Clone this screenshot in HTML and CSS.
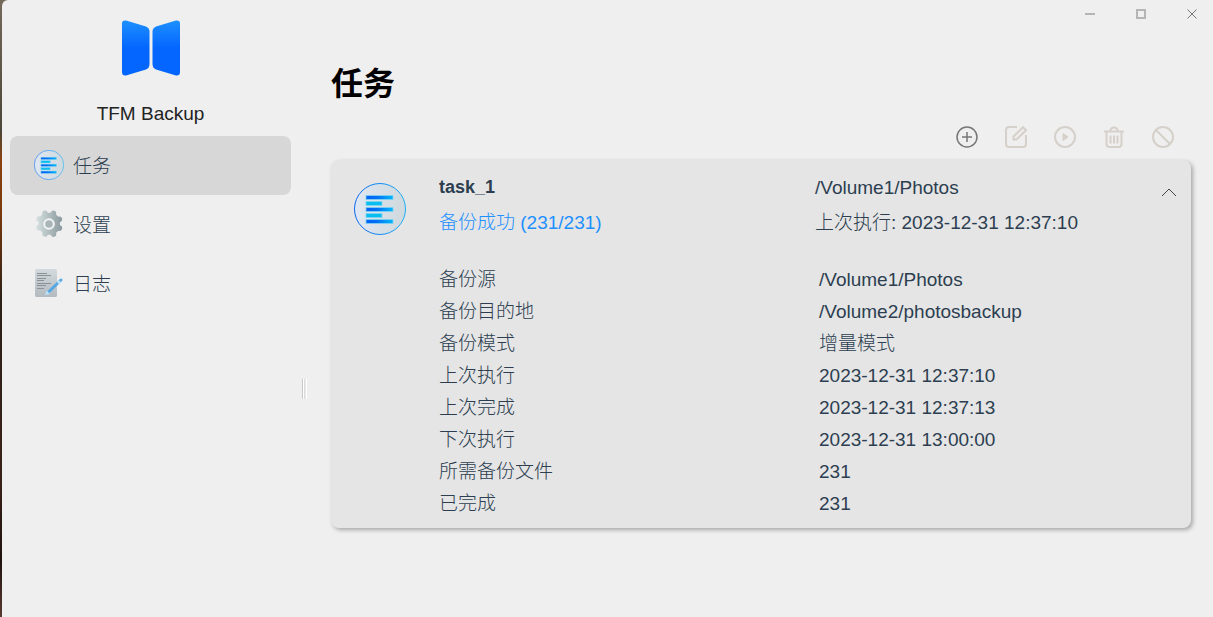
FILE: index.html
```html
<!DOCTYPE html>
<html lang="zh-CN">
<head>
    <meta charset="UTF-8">
    <meta name="viewport" content="width=device-width, initial-scale=1.0">
    <title>TFM Backup</title>
    <link rel="stylesheet" href="styles.css">
</head>
<body>
    <svg class="defs" aria-hidden="true">
        <defs>
            <linearGradient id="disc" x1="0" y1="0" x2="1" y2="0">
                <stop offset="0" stop-color="#dfe8f2"/>
                <stop offset="1" stop-color="#cfd8dc"/>
            </linearGradient>
            <linearGradient id="ring" x1="0" y1="0" x2="1" y2="0">
                <stop offset="0" stop-color="#0a66f0"/>
                <stop offset="1" stop-color="#1cb0f6"/>
            </linearGradient>
            <linearGradient id="bar" x1="0" y1="0" x2="1" y2="0">
                <stop offset="0" stop-color="#0062f5"/>
                <stop offset="0.4" stop-color="#0070f5"/>
                <stop offset="1" stop-color="#05b8fa"/>
            </linearGradient>
            <linearGradient id="book" x1="0" y1="0" x2="0" y2="1">
                <stop offset="0" stop-color="#1e90ff"/>
                <stop offset="0.5" stop-color="#0466ff"/>
                <stop offset="1" stop-color="#0466ff"/>
            </linearGradient>
            <linearGradient id="gear" x1="0" y1="0" x2="1" y2="0">
                <stop offset="0" stop-color="#d6e0e0"/>
                <stop offset="1" stop-color="#8a989d"/>
            </linearGradient>
            <linearGradient id="paper" x1="0" y1="0" x2="0" y2="1">
                <stop offset="0" stop-color="#d3d9dd"/>
                <stop offset="1" stop-color="#b3bbc0"/>
            </linearGradient>
            <symbol id="task-icon" viewBox="0 0 52 52">
                <circle cx="26" cy="26" r="25.5" fill="url(#disc)" stroke="url(#ring)"/>
                <g stroke="#7fd3f2" stroke-width="0.8">
                    <rect x="12" y="12.5" width="27" height="4" fill="url(#bar)"/>
                    <rect x="12" y="18.5" width="16" height="4" fill="#08bdf0"/>
                    <rect x="12" y="24.5" width="27" height="4" fill="url(#bar)"/>
                    <rect x="12" y="30.5" width="16" height="4" fill="#08bdf0"/>
                    <rect x="12" y="36.5" width="27" height="4" fill="url(#bar)"/>
                </g>
            </symbol>
        </defs>
    </svg>

    <div class="app">
        <aside class="sidebar">
            <svg class="logo" viewBox="0 0 58 56">
                <path fill="url(#book)" d="M0 3.5Q0 0 4 .5L24 6.5Q27.5 8 27.5 11.5V44Q27.5 48 24 49.5L4 55.5Q0 56 0 52Z"/>
                <path fill="url(#book)" d="M58 3.5Q58 0 54 .5L34 6.5Q30.5 8 30.5 11.5V44Q30.5 48 34 49.5L54 55.5Q58 56 58 52Z"/>
            </svg>
            <div class="app-name">TFM Backup</div>
            <nav>
                <a class="nav-item active" href="#tasks">
                    <svg class="nav-icon"><use href="#task-icon"/></svg>
                    <span>任务</span>
                </a>
                <a class="nav-item" href="#settings">
                    <svg class="nav-icon" viewBox="0 0 30 30">
                        <path fill="url(#gear)" d="M10.5 1.5l2 .2 1.3 2h2.8l1.3-2 2-.2 2.2 1.3.1 3 1.8 1.8 3 .2 1.2 2-.3 2-2 1.6v2.6l2 1.5.3 2-1.2 2.2-3 .2-1.8 1.8-.1 3-2.2 1.3-2-.2-1.3-2h-2.8l-1.3 2-2-.2-2.2-1.3-.1-3-1.8-1.8-3-.2-1.2-2.2.3-2 2-1.5v-2.6l-2-1.6-.3-2 1.2-2 3-.2 1.8-1.8.1-3z"/>
                        <circle cx="15" cy="15" r="4.8" fill="#a9b5b8" stroke="#f2f5f5" stroke-width="2"/>
                    </svg>
                    <span>设置</span>
                </a>
                <a class="nav-item" href="#logs">
                    <svg class="nav-icon" viewBox="0 0 30 30">
                        <rect x="1" y="1" width="22" height="28" rx="1.5" fill="url(#paper)"/>
                        <path stroke="#8b9194" d="M3 5.5h10M3 7.5h14M3 10.5h9M3 12.5h7M3 15.5h14M3 17.5h9M3 20.5h7"/>
                        <path stroke="#55a8e4" stroke-width="3" stroke-linecap="round" d="M14 24.500L27 12"/>
                        <path fill="#b9e3fa" d="M11 27l1.500-4.500 3.500 3.300zM22.800 14l2-2 2.200 2.200-2 2z"/>
                    </svg>
                    <span>日志</span>
                </a>
            </nav>
        </aside>

        <div class="splitter"></div>

        <main class="content">
            <div class="titlebar">
                <button type="button" aria-label="最小化">
                    <svg viewBox="0 0 10 10"><path stroke="#b5b5b5" stroke-width="2" d="M0 5h10"/></svg>
                </button>
                <button type="button" aria-label="最大化">
                    <svg viewBox="0 0 10 10"><rect x="1" y="1" width="8" height="8" stroke="#b5b5b5" stroke-width="2" fill="none"/></svg>
                </button>
                <button type="button" aria-label="关闭">
                    <svg viewBox="0 0 10 10"><path stroke="#777" d="M.5.5l9 9M9.5.5l-9 9"/></svg>
                </button>
            </div>

            <h1>任务</h1>

            <div class="toolbar">
                <button type="button" class="tool" aria-label="新建">
                    <svg viewBox="0 0 24 24"><circle cx="12" cy="12" r="10"/><path d="M12 7v10M7 12h10"/></svg>
                </button>
                <button type="button" class="tool" aria-label="编辑" disabled>
                    <svg viewBox="0 0 24 24"><path d="M13 2H5Q2 2 2 5V19Q2 22 5 22H19Q22 22 22 19V10"/><path d="M9.500 14.500v-3L19 2.200l3 3L12.500 14.500z"/></svg>
                </button>
                <button type="button" class="tool" aria-label="执行" disabled>
                    <svg viewBox="0 0 24 24"><circle cx="12" cy="12" r="10"/><path class="solid" d="M10 8.500l5 3.500-5 3.500z"/></svg>
                </button>
                <button type="button" class="tool" aria-label="删除" disabled>
                    <svg viewBox="0 0 24 24"><path d="M2 6.500h20M4.500 6.500V19q0 3 3 3h9q3 0 3-3V6.500M8.500 6q0-3.500 3.500-3.500t3.500 3.500M8.500 10.500v8M12 10.500v8M15.500 10.500v8"/></svg>
                </button>
                <button type="button" class="tool" aria-label="停止" disabled>
                    <svg viewBox="0 0 24 24"><circle cx="12" cy="12" r="10"/><path d="M5 5l14 14"/></svg>
                </button>
            </div>

            <section class="task">
                <svg class="task-icon"><use href="#task-icon"/></svg>
                <div class="task-body">
                    <div class="task-head">
                        <div class="task-col">
                            <div class="task-name">task_1</div>
                            <div class="task-status">备份成功 (231/231)</div>
                        </div>
                        <div class="task-col">
                            <div>/Volume1/Photos</div>
                            <div>上次执行: 2023-12-31 12:37:10</div>
                        </div>
                        <button type="button" class="toggle" aria-label="收起" aria-expanded="true">
                            <svg viewBox="0 0 16 9"><path d="M1 8l7-7 7 7"/></svg>
                        </button>
                    </div>
                    <dl class="details">
                        <dt>备份源</dt><dd>/Volume1/Photos</dd>
                        <dt>备份目的地</dt><dd>/Volume2/photosbackup</dd>
                        <dt>备份模式</dt><dd>增量模式</dd>
                        <dt>上次执行</dt><dd>2023-12-31 12:37:10</dd>
                        <dt>上次完成</dt><dd>2023-12-31 12:37:13</dd>
                        <dt>下次执行</dt><dd>2023-12-31 13:00:00</dd>
                        <dt>所需备份文件</dt><dd>231</dd>
                        <dt>已完成</dt><dd>231</dd>
                    </dl>
                </div>
            </section>
        </main>
    </div>
</body>
</html>
```
FILE: styles.css
```css
* {
    box-sizing: border-box;
}
body {
    margin: 0;
    font-family: "Liberation Sans", Arial, "Noto Sans CJK SC", sans-serif;
    font-size: 19px;
    font-weight: 300;
    color: #2c3e50;
    background: linear-gradient(#75695a 0, #4b4638 130px, #8a4310 160px, #7c3a0c 210px, #2c2018 300px, #3a2218 480px, #20120e 560px, #5a3a30 100%);
}
button {
    padding: 0;
    border: none;
    background: none;
    cursor: pointer;
}
button:disabled {
    cursor: default;
}
.defs {
    position: absolute;
    width: 0;
    height: 0;
}
.app {
    display: flex;
    min-height: 100vh;
    margin-left: 2px;
    background: #efefef;
    border-top-left-radius: 6px;
}

/* sidebar */
.sidebar {
    flex: none;
    width: 300px;
    padding: 20px 11px 0 8px;
}
.logo {
    display: block;
    width: 58px;
    height: 56px;
    margin: 0 auto;
}
.app-name {
    margin: 26px 0 10px;
    line-height: 24px;
    text-align: center;
    color: #222;
}
.nav-item {
    display: flex;
    align-items: center;
    gap: 9px;
    height: 59px;
    padding: 0 24px 2px;
    border-radius: 8px;
    color: inherit;
    text-decoration: none;
}
.nav-item.active {
    background: #d7d7d7;
}
.nav-icon {
    width: 30px;
    height: 30px;
    fill: none;
}
.splitter {
    flex: none;
    align-self: center;
    width: 5px;
    height: 20px;
    margin-top: 161px;
    border-left: 1px solid #c8c8c8;
    border-right: 1px solid #fff;
    background: linear-gradient(90deg, #fff 1px, #dcdcdc 1px, #dcdcdc 2px, #e8e8e8 2px);
}

/* content */
.content {
    flex: 1;
    min-width: 0;
    padding: 0 22px 0 24px;
}
.titlebar {
    display: flex;
    justify-content: flex-end;
    gap: 9px;
    margin-right: -22px;
}
.titlebar button {
    display: flex;
    align-items: center;
    justify-content: center;
    width: 42px;
    height: 28px;
}
.titlebar svg {
    width: 10px;
    height: 10px;
}
h1 {
    margin: 32px 0 17px;
    font-size: 32px;
    line-height: 48px;
    color: #000;
}
.toolbar {
    display: flex;
    justify-content: flex-end;
    gap: 25px;
    margin: 0 16px 11px 0;
}
.tool,
.tool svg {
    display: block;
    width: 24px;
    height: 24px;
}
.tool svg {
    fill: none;
    stroke: #777;
    stroke-width: 1.5;
}
.tool:disabled svg {
    stroke: #d5d0ca;
    stroke-width: 2;
}
.tool .solid {
    fill: #d5d0ca;
    stroke-width: 1;
}

/* task card */
.task {
    display: flex;
    gap: 33px;
    padding: 10px 0 8px 23px;
    border-radius: 8px;
    background: #e5e5e5;
    box-shadow: 2px 2px 4px rgba(0, 0, 0, 0.3);
}
.task-icon {
    flex: none;
    width: 52px;
    height: 52px;
    margin-top: 13px;
}
.task-body {
    flex: 1;
    min-width: 0;
}
.task-head {
    position: relative;
    display: grid;
    grid-template-columns: 1fr 1fr;
    line-height: 35px;
}
.task-name {
    font-size: 18px;
    font-weight: bold;
}
.task-status {
    color: #1e90ff;
}
.toggle {
    position: absolute;
    top: 10px;
    right: 10px;
    display: flex;
    align-items: center;
    justify-content: center;
    width: 24px;
    height: 24px;
}
.toggle svg {
    width: 16px;
    height: 9px;
    fill: none;
    stroke: #444;
}
.details {
    display: grid;
    grid-template-columns: 1fr 1fr;
    column-gap: 8px;
    margin: 24px 0 0;
    line-height: 32px;
}
.details dd {
    margin: 0;
}
```
